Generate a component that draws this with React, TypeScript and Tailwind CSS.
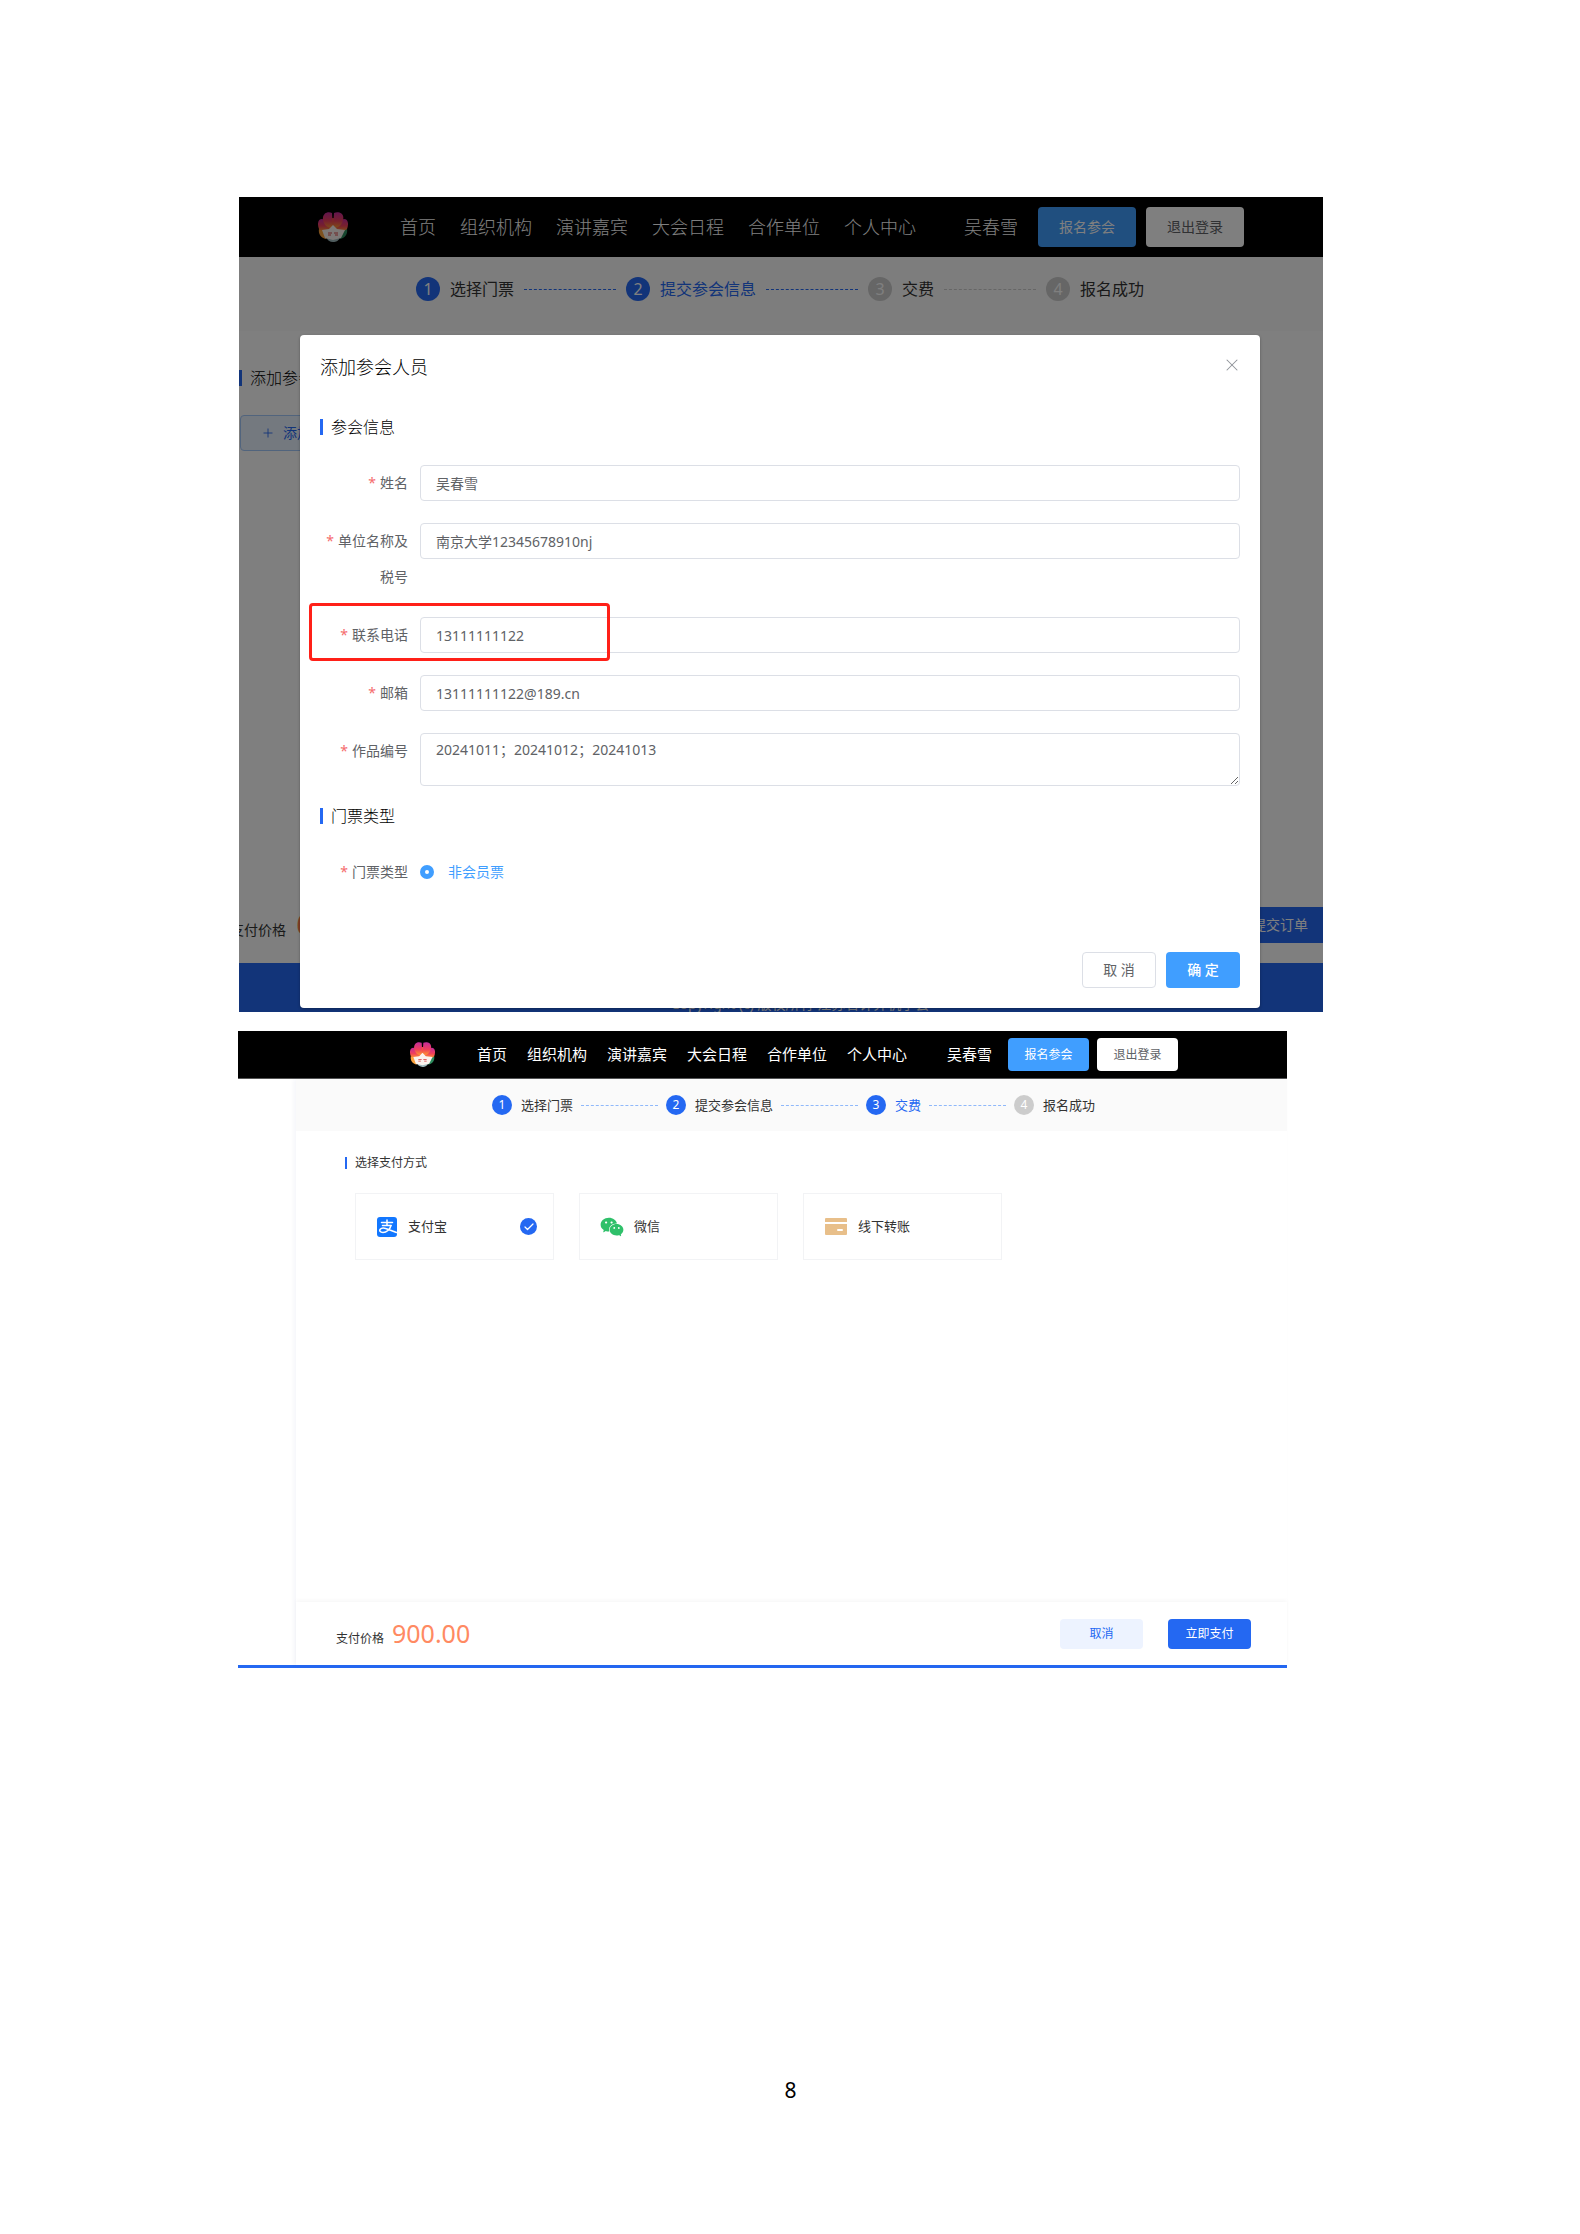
import React, { useState } from 'react';
import { AiFillWechat } from 'react-icons/ai';
import { Check, Plus, X } from 'lucide-react';
import clsx from 'clsx';

const NAV = ['首页', '组织机构', '演讲嘉宾', '大会日程', '合作单位', '个人中心'];
const STEPS = ['选择门票', '提交参会信息', '交费', '报名成功'];

const Logo = ({ className }: { className: string }) => (
  <svg viewBox="0 0 30 30" className={className} aria-hidden="true">
    <defs>
      <linearGradient id="petal" x1="0" y1="0" x2="0" y2="1">
        <stop offset="0" stopColor="#c42a9c" />
        <stop offset="0.55" stopColor="#f0405a" />
        <stop offset="1" stopColor="#ff9a2e" />
      </linearGradient>
    </defs>
    <ellipse cx="15" cy="15" rx="11" ry="9" fill="#f4553f" />
    {/* bottom petals */}
    <path d="M1 17 C0 22 3 26 8 27 L14 20 Z" fill="#fba23c" />
    <path d="M29 17 C30 22 27 26 22 27 L16 20 Z" fill="#2c8a5c" />
    <path d="M8 25 L22 25 C21 29 18 30 15 30 C12 30 9 28 8 25 Z" fill="#9fb9bd" />
    {/* side petals */}
    <path d="M1 17 C-2 9 2 5 7 8 L15 18 C10 20 4 20 1 17 Z" fill="url(#petal)" />
    <path d="M29 17 C32 9 28 5 23 8 L15 18 C20 20 26 20 29 17 Z" fill="url(#petal)" />
    {/* top petals */}
    <path d="M5 8 C4 1 10 -1 14 1 L15 16 C9 16 6 13 5 8 Z" fill="url(#petal)" />
    <path d="M25 8 C27 1 20 -1 16 1 L15 16 C21 16 24 13 25 8 Z" fill="url(#petal)" />
    <path d="M4 18 L11 17 L15 13 L19 17 L27 18 L23 26 L15 28 L7 26 Z" fill="#fbf3ee" />
    <path d="M10 21 h4 M10 23 h3 M16 21 h4 M17 23 h3" stroke="#d8484c" strokeWidth="1" />
  </svg>
);

const SiteHeader = ({ compact = false }: { compact?: boolean }) => (
  <header
    className={clsx(
      'flex items-center justify-center bg-black text-white',
      compact ? 'h-12 border-b border-[#555] pl-[63px] text-[15px]' : 'h-[60px] text-lg font-light',
    )}
  >
    <Logo className={compact ? 'mr-[42px] size-[25px]' : 'mr-[52px] size-[30px]'} />
    <nav className={clsx('flex whitespace-nowrap', compact ? 'gap-5' : 'gap-6')}>
      {NAV.map((item) => (
        <a key={item} href="#">{item}</a>
      ))}
    </nav>
    <span className={clsx('whitespace-nowrap', compact ? 'mr-4 ml-10' : 'mr-5 ml-12')}>吴春雪</span>
    <div className={clsx('flex font-normal', compact ? 'gap-2 text-xs' : 'gap-[10px] text-sm')}>
      <button className={clsx('rounded bg-[#409eff] text-white', compact ? 'h-[33px] w-[81px]' : 'h-10 w-[98px]')}>
        报名参会
      </button>
      <button className={clsx('rounded bg-white text-[#606266]', compact ? 'h-[33px] w-[81px]' : 'h-10 w-[98px]')}>
        退出登录
      </button>
    </div>
  </header>
);

const Steps = ({ current, compact = false }: { current: number; compact?: boolean }) => (
  <ol
    className={clsx(
      'flex justify-center bg-[#fafafa] whitespace-nowrap text-[#333]',
      compact ? 'h-[52px] gap-2 pt-4 pl-1 text-[13px] leading-5' : 'h-[74px] gap-[10px] pt-5 pr-0.5 text-base leading-6',
    )}
  >
    {STEPS.map((label, i) => {
      const n = i + 1;
      return (
        <li key={label} className={clsx('flex items-center', compact ? 'h-5 gap-2' : 'h-6 gap-[10px]')}>
          <span
            className={clsx(
              'rounded-full text-center text-white',
              compact ? 'mr-px size-5 text-xs leading-5' : 'size-6 text-base leading-6',
              n <= current ? 'bg-[#2468f2]' : 'bg-[#ccc]',
            )}
          >
            {n}
          </span>
          <span className={clsx(n === current && 'text-[#2468f2]')}>{label}</span>
          {n < STEPS.length && (
            <span
              className={clsx(
                'border-t border-dashed',
                compact ? 'w-[77px] border-[#8fb8fa]' : 'w-[92px]',
                !compact && (n <= current ? 'border-[#2468f2]' : 'border-[#ccc]'),
              )}
            />
          )}
        </li>
      );
    })}
  </ol>
);

const SectionTitle = ({ children }: { children: React.ReactNode }) => (
  <h3 className="flex h-6 items-center gap-2 text-base font-light text-black">
    <span className="h-4 w-[3px] bg-[#2468f2]" />
    {children}
  </h3>
);

interface FieldProps {
  id: string;
  label: string;
  value: string;
  multiline?: boolean;
  highlighted?: boolean;
}

const Field = ({ id, label, value, multiline, highlighted }: FieldProps) => {
  const [text, setText] = useState(value);
  return (
    <div className="relative flex items-start">
      <label htmlFor={id} className="w-[100px] shrink-0 pr-3 text-right leading-9">
        <span className="mr-1 text-[#f56c6c]">*</span>
        {label}
      </label>
      {multiline ? (
        <textarea
          id={id}
          value={text}
          onChange={(e) => setText(e.target.value)}
          className="h-[53px] min-w-0 flex-1 rounded border border-[#dcdfe6] px-[15px] py-1 leading-6 outline-none"
        />
      ) : (
        <input
          id={id}
          value={text}
          onChange={(e) => setText(e.target.value)}
          className="h-9 min-w-0 flex-1 rounded border border-[#dcdfe6] px-[15px] outline-none"
        />
      )}
      {highlighted && (
        <div className="pointer-events-none absolute -top-[14px] -left-[11px] h-[58px] w-[301px] rounded-sm border-[3px] border-[#ff2018]" />
      )}
    </div>
  );
};

const AttendeeDialog = () => (
  <div
    role="dialog"
    aria-label="添加参会人员"
    className="z-10 col-start-1 row-start-1 mt-[138px] mr-[63px] mb-1 ml-[61px] rounded-sm bg-white p-5 text-sm text-[#606266] shadow-[0_1px_3px_rgba(0,0,0,0.3)]"
  >
    <div className="flex h-6 items-center justify-between">
      <h2 className="text-lg font-light text-black">添加参会人员</h2>
      <button aria-label="关闭" className="-mr-0.5 self-start text-[#909399]">
        <X size={20} strokeWidth={1.25} />
      </button>
    </div>

    <form className="pt-9">
      <SectionTitle>参会信息</SectionTitle>
      <div className="flex flex-col gap-[22px] pt-[26px] pb-[18px]">
        <Field id="name" label="姓名" value="吴春雪" />
        <Field id="company" label="单位名称及税号" value="南京大学12345678910nj" />
        <Field id="phone" label="联系电话" value="13111111122" highlighted />
        <Field id="email" label="邮箱" value="13111111122@189.cn" />
        <Field id="works" label="作品编号" value="20241011；20241012；20241013" multiline />
      </div>

      <SectionTitle>门票类型</SectionTitle>
      <div className="mt-[26px] flex h-9 items-center">
        <span className="w-[100px] pr-3 text-right">
          <span className="mr-1 text-[#f56c6c]">*</span>
          门票类型
        </span>
        <label className="flex items-center gap-[14px] text-[#409eff]">
          <input
            type="radio"
            name="ticket"
            defaultChecked
            className="size-[14px] appearance-none rounded-full border-[5px] border-[#409eff] bg-white"
          />
          非会员票
        </label>
      </div>

      <div className="mt-[62px] flex justify-end gap-[10px]">
        <button type="button" className="h-9 w-[74px] rounded border border-[#dcdfe6] bg-white">取 消</button>
        <button type="button" className="h-9 w-[74px] rounded bg-[#409eff] font-medium text-white">确 定</button>
      </div>
    </form>
  </div>
);

const RegisterScreen = () => (
  <section className="ml-px grid overflow-hidden">
    <div className="col-start-1 row-start-1 flex min-w-0 flex-col bg-white">
      <SiteHeader />
      <Steps current={2} />
      <div className="flex-1 pt-[35px]">
        <SectionTitle>添加参会人员</SectionTitle>
        <button className="mt-[25px] ml-px flex h-9 items-center gap-2 rounded border border-[#a3c8fb] bg-[#e9f2ff] px-5 text-sm text-[#2468f2]">
          <Plus size={14} strokeWidth={1.5} />
          添加参会人员
        </button>
      </div>
      <div className="flex h-[76px] items-center justify-between">
        <p className="-ml-[9px] flex items-baseline gap-[10px] pb-0.5 text-sm text-[#333]">
          支付价格
          <span className="text-3xl leading-8 text-[#ff7d4d]">600.00</span>
        </p>
        <button className="-mr-[6px] h-9 w-[98px] bg-[#2468f2] text-sm text-white">提交订单</button>
      </div>
      <footer className="h-[49px] overflow-hidden bg-[#2468f2] pt-[31px] pl-[38px] text-center text-sm leading-5 text-white">
        Copyright (c) 版权所有 江苏省计算机学会
      </footer>
    </div>
    <div className="col-start-1 row-start-1 bg-black/50" />
    <AttendeeDialog />
  </section>
);

const AlipayIcon = () => (
  <svg viewBox="0 0 20 20" className="size-5" fill="none" stroke="#fff" strokeLinecap="round" aria-hidden="true">
    <rect width="20" height="20" rx="3" fill="#1277ff" stroke="none" />
    <path d="M4.5 5.5 H15.5 M10 3 V8.5 M5.5 8.5 H14" strokeWidth="1.5" />
    <path d="M14 8.5 C13 12.5 9.5 15.5 6 15.5 C3 15.5 2.2 13.6 3.2 12.2 C4.8 10.2 8.5 11 11.5 12.5 L19.5 15.5" strokeWidth="1.5" />
  </svg>
);

const BankCardIcon = () => (
  <svg viewBox="0 0 22 17" className="h-[17px] w-[22px]" aria-hidden="true">
    <path d="M1 0 H21 Q22 0 22 1 V4 H0 V1 Q0 0 1 0 Z" fill="#e8bf8a" />
    <path d="M0 6 H22 V16 Q22 17 21 17 H1 Q0 17 0 16 Z" fill="#e8bf8a" />
    <rect x="12" y="11" width="6" height="2" rx="1" fill="#fff" />
  </svg>
);

const METHODS = [
  { id: 'alipay', label: '支付宝', icon: <AlipayIcon /> },
  { id: 'wechat', label: '微信', icon: <AiFillWechat size={26} color="#2fc06a" className="-m-0.5" /> },
  { id: 'offline', label: '线下转账', icon: <BankCardIcon /> },
];

const PaymentScreen = () => {
  const [method, setMethod] = useState('alipay');
  return (
    <section className="mt-[19px] mr-9 border-b-[3px] border-[#2468f2]">
      <SiteHeader compact />
      <div className="ml-[58px] shadow-[-2px_0_4px_rgba(36,60,140,0.05)]">
        <Steps current={3} compact />
        <div className="min-h-[471px] pt-[22px] pl-[49px]">
          <h3 className="flex h-5 items-center gap-2 text-xs text-[#333]">
            <span className="h-3 w-0.5 bg-[#2468f2]" />
            选择支付方式
          </h3>
          <div className="mt-5 ml-[10px] flex gap-[25px]">
            {METHODS.map((m) => (
              <label
                key={m.id}
                className="flex h-[67px] w-[199px] items-center border border-[#f2f3f5] pr-4 pl-[21px] text-[13px] text-[#333]"
              >
                <input
                  type="radio"
                  name="method"
                  checked={method === m.id}
                  onChange={() => setMethod(m.id)}
                  className="sr-only"
                />
                {m.icon}
                <span className="ml-[11px] flex-1">{m.label}</span>
                {method === m.id && (
                  <span className="flex size-[17px] items-center justify-center rounded-full bg-[#2468f2]">
                    <Check size={12} strokeWidth={2.5} color="#fff" />
                  </span>
                )}
              </label>
            ))}
          </div>
        </div>
        <div className="flex h-[63px] items-center justify-between pr-9 pl-[40px] text-xs shadow-[0_-2px_4px_rgba(0,0,0,0.03)]">
          <p className="flex items-baseline gap-2 pb-0.5 text-[#333]">
            支付价格
            <span className="text-[25px] leading-8 text-[#ff8a62]">900.00</span>
          </p>
          <div className="flex gap-[25px]">
            <button className="h-[30px] w-[83px] rounded-sm bg-[#edf3ff] text-[#2468f2]">取消</button>
            <button className="h-[30px] w-[83px] rounded-sm bg-[#2468f2] text-white">立即支付</button>
          </div>
        </div>
      </div>
    </section>
  );
};

export default function App() {
  return (
    <main className="flex min-h-screen flex-col bg-white pt-[197px] pr-[257px] pb-[130px] pl-[238px] font-['Noto_Sans','Noto_Sans_CJK_SC',sans-serif]">
      <RegisterScreen />
      <PaymentScreen />
      <p className="mt-auto ml-5 text-center text-[21px] leading-7 text-black">8</p>
    </main>
  );
}
